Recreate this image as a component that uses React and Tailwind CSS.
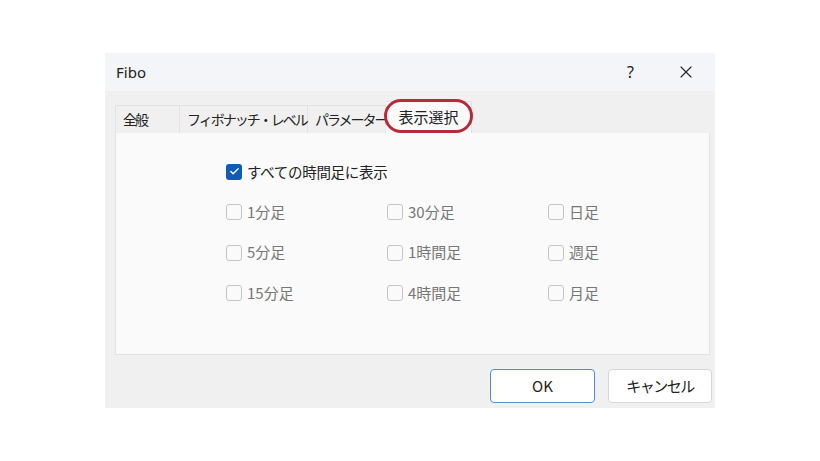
import { X, Check } from 'lucide-react'

const JP = { fontFamily: '"Noto Sans CJK JP", "Noto Sans", sans-serif' }

const TABS = [
  { label: '全般', w: 'w-[65px]' },
  { label: 'フィボナッチ・レベル', w: 'w-[128px]' },
  { label: 'パラメーター', w: 'w-[78px]' },
]

const ROWS = [
  ['1分足', '30分足', '日足'],
  ['5分足', '1時間足', '週足'],
  ['15分足', '4時間足', '月足'],
]

const Box = ({ checked }) =>
  checked ? (
    <span className="w-4 h-4 rounded-[3px] bg-[#0f5cb8] flex items-center justify-center shrink-0">
      <Check size={11} strokeWidth={3} className="text-white" />
    </span>
  ) : (
    <span className="w-4 h-4 rounded-[3px] border border-[#c4c4c4] bg-[#fafafa] shrink-0" />
  )

const App = () => {
  return (
    <div className="w-[820px] h-[461px] bg-white pt-[53px] pl-[105px]" style={JP}>
      <div className="w-[610px] h-[355px] bg-[#f0f0f0] flex flex-col">
        {/* title bar */}
        <div className="h-[38px] bg-[#f3f5f9] flex items-center justify-between pl-[11px] pr-[19px]">
          <span className="text-[15px] text-[#222]" style={{ fontFamily: '"Noto Sans", sans-serif' }}>Fibo</span>
          <div className="flex items-center gap-[42px]">
            <span className="text-[16px] text-[#222]" style={{ fontFamily: '"Noto Sans", sans-serif' }}>?</span>
            <X size={20} strokeWidth={1.3} className="text-[#222]" />
          </div>
        </div>

        <div className="flex-1 flex flex-col pl-[10px] pr-[5px] pt-[10px]">
          {/* tabs */}
          <div className="flex h-[32px] items-end">
            {TABS.map((t) => (
              <div
                key={t.label}
                className={`${t.w} h-[28px] border-t border-r border-[#e3e3e3] first:border-l flex items-center pl-[7px] text-[14px] text-[#222] whitespace-nowrap tracking-[-2px]`}
              >
                {t.label}
              </div>
            ))}
            <div className="relative w-[86px] h-[32px] bg-[#fafafa] border-t border-r border-[#e0e0e0] flex items-center justify-center text-[15px] text-[#222]">
              表示選択
              <div className="absolute inset-x-[-2px] top-[-3px] bottom-[0px] border-[3px] border-[#b82a3a] rounded-full" />
            </div>
          </div>

          {/* panel */}
          <div className="h-[222px] bg-[#fafafa] border border-[#e2e2e2] border-t-0 pt-[28px] pl-[110px]">
            <div className="flex items-center gap-[5px] text-[14.5px] text-[#222] tracking-[-0.3px]">
              <Box checked />
              <span>すべての時間足に表示</span>
            </div>
            <div className="mt-[18px] flex flex-col gap-[23.5px]">
              {ROWS.map((row, i) => (
                <div key={i} className="grid grid-cols-[161px_161px_161px] h-[17px]">
                  {row.map((c) => (
                    <div key={c} className="flex items-center gap-[5px] text-[15px] text-[#777]">
                      <Box />
                      <span>{c}</span>
                    </div>
                  ))}
                </div>
              ))}
            </div>
          </div>

          {/* footer */}
          <div className="flex justify-end gap-[13px] pt-[14px] mr-[-2px]">
            <button className="w-[105px] h-[34px] rounded-[4px] bg-white border border-[#4a90d9] text-[15px] text-[#222]">
              OK
            </button>
            <button className="w-[104px] h-[34px] rounded-[4px] bg-white border border-[#d6d6d6] text-[15px] text-[#222] tracking-[-1.5px]">
              キャンセル
            </button>
          </div>
        </div>
      </div>
    </div>
  )
}

export default App
